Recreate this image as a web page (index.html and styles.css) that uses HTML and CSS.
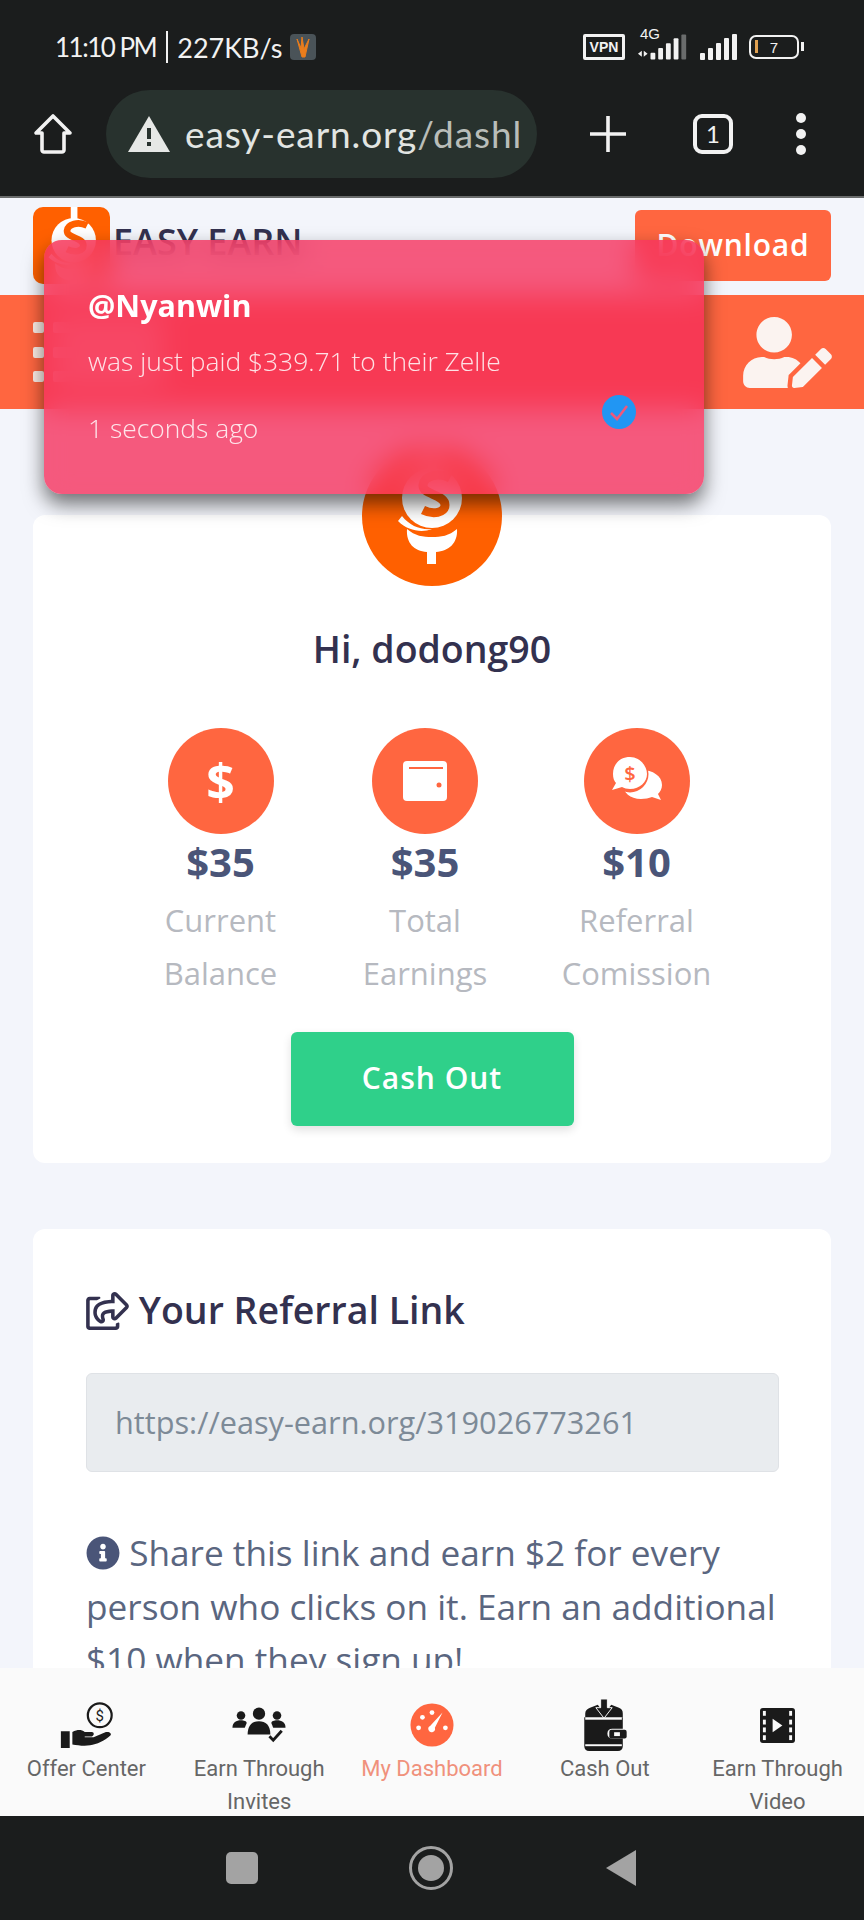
FILE: index.html
```html
<!DOCTYPE html>
<html lang="en">
<head>
<meta charset="UTF-8">
<meta name="viewport" content="width=device-width">
<title>Dashboard</title>
<link rel="stylesheet" href="styles.css">
</head>
<body>
<svg class="defs" width="0" height="0">
	<symbol id="mark" viewBox="0 0 140 140">
		<rect x="66" y="0" width="9" height="26" fill="#fff"/>
		<circle cx="70" cy="52" r="30" fill="#fff"/>
		<path d="M88 32c-12-6-26-2-27 7-1 10 22 9 22 20 0 8-12 10-22 5" fill="none" stroke="#ff6000" stroke-width="9"/>
		<path d="M40 70c8 10 18 14 30 13-10 4-24 2-34-8z" fill="#fff"/>
		<path d="M45 83c8 7 16 8 25 8s17-1 25-8c1 14-8 22-21 23v12h-9v-12c-13-1-21-9-20-23z" fill="#fff"/>
	</symbol>
</svg>

<!-- status bar -->
<div class="status">
	<div class="status-left">
		<span class="clock">11:10 PM</span>
		<i class="divider"></i>
		<span>227KB/s</span>
		<svg class="app-icon" viewBox="0 0 26 26">
			<rect width="26" height="26" rx="4" fill="#4a5358"/>
			<path d="M7 5l4 9 1-11 2 12 5-10-4 18h-3z" fill="#ea7d1c" stroke="#ea7d1c"/>
		</svg>
	</div>
	<div class="status-right">
		<span class="vpn">VPN</span>
		<div class="signal">
			<span class="net">4G</span>
			<svg class="bars-sim1" viewBox="0 0 56 26">
				<path d="M1 20l4-3v6zM7 17l4 3-4 3z" fill="#f2f2f2"/>
				<rect x="14" y="19" width="5" height="7" rx="1" fill="#f2f2f2"/>
				<rect x="22" y="14" width="5" height="12" rx="1" fill="#f2f2f2"/>
				<rect x="30" y="9" width="5" height="17" rx="1" fill="#f2f2f2"/>
				<rect x="38" y="4" width="5" height="22" rx="1" fill="#f2f2f2"/>
				<rect x="46" y="0" width="5" height="26" rx="1" fill="#6a6c6c"/>
			</svg>
		</div>
		<svg class="bars-sim2" viewBox="0 0 38 26">
			<rect x="0" y="19" width="5" height="7" rx="1" fill="#f2f2f2"/>
			<rect x="8" y="14" width="5" height="12" rx="1" fill="#f2f2f2"/>
			<rect x="16" y="9" width="5" height="17" rx="1" fill="#f2f2f2"/>
			<rect x="24" y="4" width="5" height="22" rx="1" fill="#f2f2f2"/>
			<rect x="32" y="0" width="5" height="26" rx="1" fill="#f2f2f2"/>
		</svg>
		<div class="battery"><i class="level"></i><span>7</span></div>
	</div>
</div>

<!-- browser toolbar -->
<div class="browser">
	<svg class="home" viewBox="0 0 40 42">
		<path d="M20 3L3 20h6v17c0 1 1 2 2 2h18c1 0 2-1 2-2V20h6z" fill="none" stroke="#f2f2f2" stroke-width="3.6" stroke-linejoin="round"/>
	</svg>
	<div class="url">
		<svg class="warn" viewBox="0 0 42 36">
			<path d="M21 0l21 36H0z" fill="#e6e8e6"/>
			<rect x="19" y="12" width="4" height="11" fill="#28322e"/>
			<rect x="19" y="26" width="4" height="4" fill="#28322e"/>
		</svg>
		<span class="url-text">easy-earn.org<span class="url-path">/dashl</span></span>
	</div>
	<svg class="plus" viewBox="0 0 36 36">
		<path d="M18 0v36M0 18h36" stroke="#f2f2f2" stroke-width="3.6"/>
	</svg>
	<div class="tabs">1</div>
	<div class="dots"><i></i><i></i><i></i></div>
</div>

<!-- page -->
<div class="page">
	<header class="site-head">
		<div class="brand">
			<svg class="logo" viewBox="15 7 104 104"><use href="#mark" width="140" height="140"/></svg>
			<span class="brand-name">EASY EARN</span>
		</div>
		<a class="download" href="#">Download</a>
	</header>
	<div class="band">
		<svg class="menu-icon" viewBox="0 0 130 60">
			<rect x="0" y="0" width="11" height="11" rx="2"/>
			<rect x="0" y="25" width="11" height="11" rx="2"/>
			<rect x="0" y="49" width="11" height="11" rx="2"/>
			<rect x="20" y="0" width="110" height="11" rx="2"/>
			<rect x="20" y="25" width="110" height="11" rx="2"/>
			<rect x="20" y="49" width="110" height="11" rx="2"/>
		</svg>
		<svg class="user-edit" viewBox="0 0 640 512">
			<path d="M224 256c70.700 0 128-57.300 128-128S294.700 0 224 0 96 57.300 96 128s57.300 128 128 128zm89.600 32h-16.700c-22.200 10.200-46.900 16-72.900 16s-50.600-5.800-72.900-16h-16.700C60.200 288 0 348.200 0 422.400V464c0 26.500 21.500 48 48 48h274.900c-2.400-6.800-3.400-14-2.600-21.300l6.800-60.900 1.200-11.100 7.900-7.900 77.300-77.300c-24.500-27.700-60-45.500-99.900-45.500zm45.300 145.300l-6.800 61c-1.100 10.200 7.500 18.800 17.600 17.600l60.900-6.800 137.900-137.900-71.700-71.700-137.900 137.800zM633 268.900L595.100 231c-9.300-9.300-24.500-9.300-33.800 0l-37.800 37.800-4.100 4.100 71.800 71.700 41.800-41.800c9.300-9.400 9.300-24.500 0-33.900z"/>
		</svg>
	</div>

	<section class="card card-main">
		<svg class="avatar" viewBox="0 0 140 140"><use href="#mark"/></svg>
		<h2 class="hello">Hi, dodong90</h2>
		<div class="stats">
			<div class="stat">
				<div class="stat-icon"><span class="dollar">$</span></div>
				<div class="amount">$35</div>
				<div class="stat-label">Current<br>Balance</div>
			</div>
			<div class="stat">
				<div class="stat-icon">
					<svg class="wallet" viewBox="0 0 44 40">
						<rect width="44" height="40" rx="4" fill="#fff"/>
						<rect x="6" y="6" width="34" height="2" fill="#ff6640"/>
						<circle cx="36" cy="24" r="2.500" fill="#ff6640"/>
					</svg>
				</div>
				<div class="amount">$35</div>
				<div class="stat-label">Total<br>Earnings</div>
			</div>
			<div class="stat">
				<div class="stat-icon">
					<svg class="chat" viewBox="0 0 52 44">
						<path d="M30 14c12 0 21 6 21 15 0 4-2 7-4 9l3 6-9-3c-3 1-7 2-11 2-11 0-18-7-18-14s8-15 18-15z" fill="#fff"/>
						<circle cx="19" cy="18" r="18.500" fill="#ff6640"/>
						<path d="M19 1C9 1 2 8 2 18c0 4 1 7 3 9l-4 7 10-3c2 1 5 2 8 2 10 0 17-7 17-15S29 1 19 1z" fill="#fff"/>
						<text x="19" y="25" class="chat-dollar">$</text>
					</svg>
				</div>
				<div class="amount">$10</div>
				<div class="stat-label">Referral<br>Comission</div>
			</div>
		</div>
		<a class="cash-btn" href="#">Cash Out</a>
	</section>

	<section class="card card-ref">
		<h3 class="ref-title">
			<svg class="share-icon" viewBox="0 0 576 512">
				<path d="M561.938 158.060L417.940 14.092C387.926-15.922 336 5.097 336 48.032v57.198c-42.450 1.880-84.030 6.550-120.760 17.990-35.170 10.950-63.070 27.580-82.910 49.420C108.220 199.200 96 232.600 96 271.940c0 61.697 33.178 112.455 84.870 144.760 37.546 23.508 85.248-12.651 71.020-55.740-15.515-47.119-17.156-70.923 84.110-78.760V336c0 42.993 51.968 63.913 81.940 33.940l143.998-144c18.750-18.740 18.750-49.140 0-67.880zM384 336V232.160C255.309 234.082 166.492 255.350 206.310 376 176.790 357.550 144 324.080 144 271.940c0-109.334 129.140-118.947 240-119.850V48l144 144-144 144zm24.740 84.493a82.658 82.658 0 0 0 20.974-9.303c7.976-4.952 18.286.826 18.286 10.214V464c0 26.510-21.490 48-48 48H48c-26.510 0-48-21.490-48-48V112c0-26.510 21.490-48 48-48h132c6.627 0 12 5.373 12 12v4.486c0 4.917-2.987 9.369-7.569 11.152-13.702 5.331-26.396 11.537-38.050 18.585a12.138 12.138 0 0 1-6.280 1.777H54c-3.252 0-6 2.748-6 6v340c0 3.252 2.748 6 6 6h340c3.252 0 6-2.748 6-6v-25.966c0-5.370 3.579-10.059 8.740-11.541z"/>
			</svg>
			Your Referral Link
		</h3>
		<div class="ref-input">https://easy-earn.org/319026773261</div>
		<p class="ref-text">
			<svg class="info-icon" viewBox="0 0 512 512">
				<path d="M256 8C119 8 8 119.100 8 256c0 137 111 248 248 248s248-111 248-248C504 119.100 393 8 256 8zm0 110c23.200 0 42 18.800 42 42s-18.800 42-42 42-42-18.800-42-42 18.800-42 42-42zm56 254c0 6.600-5.400 12-12 12h-88c-6.600 0-12-5.400-12-12v-24c0-6.600 5.400-12 12-12h12v-64h-12c-6.600 0-12-5.400-12-12v-24c0-6.600 5.400-12 12-12h64c6.600 0 12 5.400 12 12v100h12c6.600 0 12 5.400 12 12v24z"/>
			</svg>
			Share this link and earn $2 for every person who clicks on it. Earn an additional $10 when they sign up!
		</p>
	</section>

	<!-- payout toast -->
	<div class="toast">
		<div class="toast-name">@Nyanwin</div>
		<div class="toast-msg">was just paid $339.71 to their Zelle</div>
		<div class="toast-foot">
			<span>1 seconds ago</span>
			<svg class="verified" viewBox="0 0 34 34">
				<circle cx="17" cy="17" r="17" fill="#2196f3"/>
				<path d="M9 18l6 6 10-13" fill="none" stroke="#f0587a" stroke-width="2.500"/>
			</svg>
		</div>
	</div>
</div>

<!-- bottom menu -->
<nav class="tabbar">
	<a class="tab" href="#">
		<div class="tab-slot">
			<svg class="icon-offer" viewBox="0 0 60 52">
				<circle cx="45" cy="15" r="13.500" fill="#fafafa" stroke="#1a1a1a" stroke-width="2.500"/>
				<text x="45" y="21" class="coin-dollar">$</text>
				<path d="M1 33h10v19H1zM14 34c6-3 10-3 14 0h8c3 0 3 4 0 5h-8v1h10l14-6c4-1 7 2 5 4-7 6-15 10-23 11-7 1-14 0-20-1z" fill="#1a1a1a"/>
			</svg>
		</div>
		<span>Offer Center</span>
	</a>
	<a class="tab" href="#">
		<div class="tab-slot">
			<svg class="icon-invites" viewBox="0 0 56 38">
				<g fill="#1a1a1a">
					<circle cx="9" cy="9" r="4.500"/><path d="M0 22c0-6 4-8 9-8 3 0 6 1 6 3l-2 5z"/>
					<circle cx="47" cy="9" r="4.500"/><path d="M56 22c0-6-4-8-9-8-3 0-6 1-6 3l2 5z"/>
					<circle cx="28" cy="7" r="6.500"/><path d="M16 29c0-10 5-14 12-14s12 4 12 14z"/>
				</g>
				<path d="M39 31l4 4 9-10" fill="none" stroke="#1a1a1a" stroke-width="3"/>
			</svg>
		</div>
		<span>Earn Through<br>Invites</span>
	</a>
	<a class="tab tab-active" href="#">
		<div class="tab-slot">
			<svg class="icon-dash" viewBox="0 0 46 46">
				<circle cx="23" cy="23" r="22.500" fill="#ff6640"/>
				<g fill="#fff">
					<circle cx="9" cy="26" r="2.500"/><circle cx="13" cy="15" r="2.500"/><circle cx="23" cy="10" r="2.500"/><circle cx="37" cy="26" r="2.500"/>
					<path d="M34 10l-8 16a3.500 3.500 0 1 1-5-2z"/>
				</g>
			</svg>
		</div>
		<span>My Dashboard</span>
	</a>
	<a class="tab" href="#">
		<div class="tab-slot">
			<svg class="icon-cash" viewBox="0 0 46 54">
				<path d="M3 15c0-3 2-5 5-6l8-3 7 9 7-9 8 3c3 1 4 3 4 6v4H3z" fill="#1a1a1a"/>
				<path d="M2 19h40v12H31c-3 0-5 2-5 5s2 5 5 5h11v8c0 3-2 5-5 5H7c-3 0-5-2-5-5z" fill="#1a1a1a"/>
				<rect x="3" y="19" width="38" height="2.500" fill="#fafafa"/>
				<rect x="3" y="47" width="38" height="2" fill="#fafafa"/>
				<rect x="28" y="32" width="18" height="9" rx="2" fill="#1a1a1a"/>
				<rect x="33" y="34.500" width="6" height="4" fill="#fafafa"/>
				<path d="M19 0h7v9h5l-8.500 11L14 9h5z" fill="#1a1a1a" stroke="#fafafa" stroke-width="1"/>
			</svg>
		</div>
		<span>Cash Out</span>
	</a>
	<a class="tab" href="#">
		<div class="tab-slot">
			<svg class="icon-video" viewBox="0 0 36 36">
				<rect width="36" height="36" rx="3" fill="#1a1a1a"/>
				<g fill="#fafafa">
					<rect x="3" y="3" width="3" height="5"/><rect x="3" y="12" width="3" height="5"/><rect x="3" y="20" width="3" height="5"/><rect x="3" y="28" width="3" height="5"/>
					<rect x="30" y="3" width="3" height="5"/><rect x="30" y="12" width="3" height="5"/><rect x="30" y="20" width="3" height="5"/><rect x="30" y="28" width="3" height="5"/>
					<path d="M13 11l10 7-10 7z"/>
				</g>
			</svg>
		</div>
		<span>Earn Through<br>Video</span>
	</a>
</nav>

<!-- android buttons -->
<div class="sysnav">
	<i class="sys-square"></i>
	<i class="sys-circle"></i>
	<i class="sys-back"></i>
</div>
</body>
</html>
```

FILE: styles.css
```css
* {
	box-sizing: border-box;
}
body {
	display: flex;
	flex-direction: column;
	width: 864px;
	height: 1920px;
	margin: 0;
	overflow: hidden;
	background: #f3f5fb;
	font-family: "Open Sans", "Liberation Sans", sans-serif;
}
a {
	text-decoration: none;
}
.defs {
	position: absolute;
}

/* status bar */
.status {
	display: flex;
	justify-content: space-between;
	align-items: center;
	flex: none;
	height: 90px;
	padding: 4px 65px 0 55px;
	background: #1b1d1d;
	color: #f2f2f2;
}
.status-left {
	display: flex;
	align-items: center;
	font: 27px Lato, sans-serif;
}
.clock {
	font-size: 26px;
	letter-spacing: -1.500px;
}
.divider {
	width: 2px;
	height: 32px;
	margin: 0 9px 0 10px;
	background: #f2f2f2;
}
.app-icon {
	width: 26px;
	height: 26px;
	margin-left: 8px;
}
.status-right {
	display: flex;
	align-items: center;
}
.vpn {
	width: 42px;
	height: 26px;
	border: 3px solid #f2f2f2;
	border-radius: 2px;
	font: bold 14px/20px "Liberation Sans", sans-serif;
	text-align: center;
}
.signal {
	position: relative;
	width: 56px;
	height: 26px;
	margin-left: 12px;
}
.net {
	position: absolute;
	left: 3px;
	top: -9px;
	font: 15px "Liberation Sans", sans-serif;
}
.bars-sim1 {
	display: block;
	width: 54px;
	height: 26px;
}
.bars-sim2 {
	width: 38px;
	height: 26px;
	margin-left: 7px;
}
.battery {
	display: flex;
	position: relative;
	align-items: center;
	justify-content: center;
	width: 50px;
	height: 24px;
	margin-left: 11px;
	border: 2.500px solid #f2f2f2;
	border-radius: 7px;
	font: 15px "Liberation Sans", sans-serif;
}
.battery::after {
	content: "";
	position: absolute;
	right: -7px;
	top: 5px;
	width: 3px;
	height: 9px;
	background: #f2f2f2;
}
.level {
	position: absolute;
	left: 4px;
	top: 3px;
	width: 3px;
	height: 13px;
	background: #e0a050;
}

/* browser toolbar */
.browser {
	display: flex;
	align-items: center;
	flex: none;
	height: 108px;
	border-bottom: 2px solid #6a6c6c;
	padding: 0 0 18px 33px;
	background: #1b1d1d;
	color: #f2f2f2;
}
.home {
	width: 40px;
	height: 42px;
}
.url {
	display: flex;
	align-items: center;
	width: 431px;
	height: 88px;
	margin-left: 33px;
	padding: 0 16px 0 22px;
	border-radius: 44px;
	background: #28322e;
}
.warn {
	flex: none;
	width: 42px;
	height: 36px;
}
.url-text {
	margin-left: 15px;
	font: 37px/46px Lato, sans-serif;
	letter-spacing: .9px;
	white-space: nowrap;
	color: #e2e5e2;
}
.url-path {
	color: #b9bdb9;
}
.plus {
	width: 36px;
	height: 36px;
	margin-left: 53px;
}
.tabs {
	width: 40px;
	height: 40px;
	margin-left: 67px;
	border: 4px solid #f2f2f2;
	border-radius: 9px;
	font: 24px/31px Lato, sans-serif;
	text-align: center;
}
.dots {
	display: flex;
	flex-direction: column;
	gap: 6px;
	margin-left: 63px;
}
.dots i {
	width: 10px;
	height: 10px;
	border-radius: 50%;
	background: #f2f2f2;
}

/* page */
.page {
	position: relative;
	flex: 1;
	min-height: 0;
	overflow: hidden;
}
.site-head {
	display: flex;
	justify-content: space-between;
	align-items: flex-start;
	height: 97px;
	padding: 9px 33px 0;
}
.brand {
	display: flex;
	align-items: center;
}
.logo {
	width: 77px;
	height: 77px;
	border-radius: 10px;
	background: #ff6000;
}
.brand-name {
	margin: 0 0 8px 3px;
	font-size: 36px;
	font-weight: 600;
	color: #33314f;
}
.download {
	width: 196px;
	height: 71px;
	margin-top: 3px;
	border-radius: 6px;
	background: #ff6640;
	font-size: 30px;
	font-weight: 600;
	line-height: 69px;
	letter-spacing: .8px;
	text-align: center;
	color: #fff;
}
.band {
	display: flex;
	justify-content: space-between;
	align-items: center;
	height: 114px;
	padding: 0 32px 0 33px;
	background: #ff6640;
}
.menu-icon {
	width: 130px;
	height: 60px;
	fill: #fdeee8;
}
.user-edit {
	width: 89px;
	height: 71px;
	fill: #fbf3f0;
}
.card {
	margin: 0 33px;
	border-radius: 12px;
	background: #fff;
}
.card-main {
	display: flow-root;
	margin-top: 106px;
	padding-bottom: 37px;
}
.avatar {
	display: block;
	width: 140px;
	height: 140px;
	margin: -69px auto 0;
	border-radius: 50%;
	background: #ff6000;
}
.hello {
	margin: 37px 0 0;
	font-size: 37.500px;
	font-weight: 600;
	line-height: 52px;
	text-align: center;
	color: #33314f;
}
.stats {
	display: grid;
	grid-template-columns: 204px 205px 218px;
	justify-content: center;
	margin-top: 53px;
}
.stat {
	text-align: center;
}
.stat-icon {
	display: flex;
	align-items: center;
	justify-content: center;
	width: 106px;
	height: 106px;
	margin: 0 auto;
	border-radius: 50%;
	background: #ff6640;
}
.dollar {
	font-size: 50px;
	font-weight: 700;
	line-height: 50px;
	color: #fff;
}
.wallet {
	width: 44px;
	height: 40px;
}
.chat {
	width: 52px;
	height: 44px;
	margin-bottom: 6px;
}
.chat-dollar {
	font-size: 20px;
	font-weight: 600;
	fill: #ff6640;
	text-anchor: middle;
}
.amount {
	margin-top: 3px;
	font-size: 40px;
	font-weight: 700;
	line-height: 50px;
	color: #4a5578;
}
.stat-label {
	margin-top: 7px;
	font-size: 31px;
	line-height: 53px;
	color: #b6b9c0;
}
.cash-btn {
	display: block;
	width: 283px;
	height: 94px;
	margin: 32px auto 0;
	border-radius: 6px;
	background: #2fd08a;
	box-shadow: 0 4px 10px rgba(0, 0, 0, .12);
	font-size: 30px;
	font-weight: 600;
	line-height: 92px;
	letter-spacing: 1px;
	text-align: center;
	color: #fff;
}
.card-ref {
	margin-top: 66px;
	padding: 55px 52px 40px 53px;
}
.ref-title {
	margin: 0;
	font-size: 37.500px;
	font-weight: 600;
	line-height: 52px;
	color: #33314f;
}
.share-icon {
	width: 43px;
	height: 38px;
	vertical-align: -6px;
	fill: #33314f;
}
.ref-input {
	height: 99px;
	margin-top: 37px;
	padding-left: 28px;
	border: 1px solid #dfe2e6;
	border-radius: 6px;
	background: #e9ecef;
	font-size: 30.700px;
	line-height: 97px;
	color: #7d8a97;
}
.ref-text {
	margin: 54px 0 0;
	font-size: 35.200px;
	line-height: 53.500px;
	color: #5a6680;
}
.info-icon {
	width: 34px;
	height: 34px;
	vertical-align: -4px;
	fill: #4a5578;
}

/* payout toast */
.toast {
	position: absolute;
	left: 44px;
	top: 42px;
	width: 660px;
	height: 254px;
	padding: 46px 44px 0;
	border-radius: 18px;
	background: rgba(245, 45, 90, .78);
	box-shadow: 0 10px 20px rgba(0, 0, 0, .55);
	-webkit-backdrop-filter: blur(14px);
	backdrop-filter: blur(14px);
	color: #fff;
}
.toast-name {
	font-size: 30.500px;
	font-weight: 700;
	line-height: 38px;
}
.toast-msg {
	margin-top: 18px;
	font-size: 26.400px;
	font-weight: 300;
	line-height: 38px;
	color: rgba(255, 255, 255, .85);
}
.toast-foot {
	display: flex;
	justify-content: space-between;
	margin-top: 29px;
	padding-right: 24px;
	font-size: 26.400px;
	font-weight: 300;
	line-height: 38px;
	color: rgba(255, 255, 255, .85);
}
.verified {
	width: 34px;
	height: 34px;
	margin-top: -14px;
}

/* bottom menu */
.tabbar {
	display: grid;
	grid-template-columns: repeat(5, 1fr);
	flex: none;
	height: 148px;
	overflow: hidden;
	background: #fafafa;
}
.tab {
	display: flex;
	flex-direction: column;
	align-items: center;
	padding-top: 29px;
	font: 22px/33px Roboto, sans-serif;
	text-align: center;
	color: #666;
}
.tab span {
	margin-top: -1px;
}
.tab-slot {
	display: flex;
	align-items: center;
	justify-content: center;
	flex: none;
	height: 56px;
}
.icon-offer {
	width: 53px;
	height: 46px;
}
.icon-invites {
	width: 54px;
	height: 36px;
}
.icon-dash {
	width: 44px;
	height: 44px;
}
.icon-cash {
	width: 45px;
	height: 52px;
}
.icon-video {
	width: 35px;
	height: 35px;
}
.tab-active {
	color: #f0917c;
}
.coin-dollar {
	font-size: 17px;
	fill: #1a1a1a;
	text-anchor: middle;
}

/* android buttons */
.sysnav {
	position: relative;
	flex: none;
	height: 104px;
	background: #1b1d1d;
}
.sys-square {
	position: absolute;
	left: 226px;
	top: 36px;
	width: 32px;
	height: 32px;
	border-radius: 5px;
	background: #a3a3a3;
}
.sys-circle {
	position: absolute;
	left: 409px;
	top: 30px;
	width: 44px;
	height: 44px;
	border: 3px solid #a3a3a3;
	border-radius: 50%;
}
.sys-circle::after {
	content: "";
	position: absolute;
	left: 6px;
	top: 6px;
	width: 26px;
	height: 26px;
	border-radius: 50%;
	background: #a3a3a3;
}
.sys-back {
	position: absolute;
	left: 606px;
	top: 34px;
	width: 30px;
	height: 36px;
	background: #a3a3a3;
	clip-path: polygon(100% 0, 100% 100%, 0 50%);
}
```
